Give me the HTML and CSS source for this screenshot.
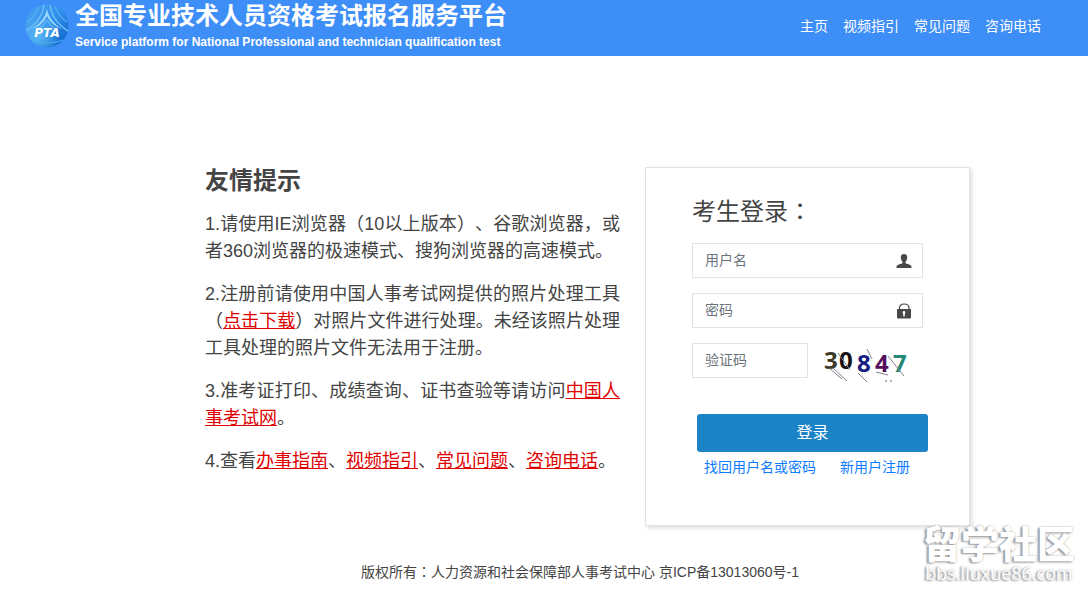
FILE: index.html
```html
<!DOCTYPE html>
<html lang="zh-CN">
<head>
<meta charset="utf-8">
<meta name="viewport" content="width=device-width, initial-scale=1">
<title>全国专业技术人员资格考试报名服务平台</title>
<link rel="stylesheet" href="styles.css">
</head>
<body>
<header class="header">
  <svg class="logo" viewBox="0 0 44 44" aria-hidden="true">
    <defs>
      <linearGradient id="globe" x1="0" y1="0" x2="1" y2="1">
        <stop offset="0" stop-color="#4ba5f3"/>
        <stop offset=".5" stop-color="#2f90ea"/>
        <stop offset="1" stop-color="#0a5fc0"/>
      </linearGradient>
      <radialGradient id="glow" cx=".3" cy=".75" r=".5">
        <stop offset="0" stop-color="#6cc6fa" stop-opacity=".7"/>
        <stop offset="1" stop-color="#6cc6fa" stop-opacity="0"/>
      </radialGradient>
      <clipPath id="disc"><circle cx="22" cy="22" r="21.500"/></clipPath>
    </defs>
    <circle cx="22" cy="22" r="21.500" fill="url(#globe)"/>
    <circle cx="22" cy="22" r="21.500" fill="url(#glow)"/>
    <g clip-path="url(#disc)" fill="none">
      <path d="M19 0C18 12 12 20 1 27M25 0C26 12 32 20 43 27" stroke="#6dbbf9" stroke-width="1.500"/>
      <path d="M14 2C12 9 8 14 2 18M30 2C32 9 36 14 42 18" stroke="#58abf5" stroke-width="1.200"/>
      <path d="M22 5C20 14 15 20 7 25C15 22 20 17 22 12C24 17 29 22 37 25C29 20 24 14 22 5Z" fill="#9bd6fc"/>
      <path d="M22 16C20 20 17 23 13 25M22 16C24 20 27 23 31 25" stroke="#64b9f7" stroke-width="1.200"/>
      <path d="M2 35Q22 43 42 35" stroke="#4daef0" stroke-width="1"/>
    </g>
    <text class="logo-text" x="22" y="33" text-anchor="middle">PTA</text>
  </svg>
  <div class="brand">
    <h1 class="brand-name">全国专业技术人员资格考试报名服务平台</h1>
    <p class="brand-sub">Service platform for National Professional and technician qualification test</p>
  </div>
  <nav class="nav">
    <a href="#">主页</a>
    <a href="#">视频指引</a>
    <a href="#">常见问题</a>
    <a href="#">咨询电话</a>
  </nav>
</header>

<main class="main">
  <section class="tips">
    <h2 class="tips-title">友情提示</h2>
    <p>1.请使用IE浏览器（10以上版本）、谷歌浏览器，或者360浏览器的极速模式、搜狗浏览器的高速模式。</p>
    <p>2.注册前请使用中国人事考试网提供的照片处理工具（<a href="#">点击下载</a>）对照片文件进行处理。未经该照片处理工具处理的照片文件无法用于注册。</p>
    <p>3.准考证打印、成绩查询、证书查验等请访问<a href="#">中国人事考试网</a>。</p>
    <p>4.查看<a href="#">办事指南</a>、<a href="#">视频指引</a>、<a href="#">常见问题</a>、<a href="#">咨询电话</a>。</p>
  </section>

  <form class="login">
    <h2 class="login-title">考生登录<span class="centered" lang="zh-TW">：</span></h2>
    <div class="field">
      <input type="text" placeholder="用户名" aria-label="用户名">
      <svg class="icon" viewBox="0 0 16 16" aria-hidden="true">
        <path d="M8 1C5.800 1 4.700 2.500 4.800 4.500C4.900 6.300 5.500 7.800 6.500 8.700V10C5.500 11.200 1 11.300 .500 13.500V15H15.500V13.500C15 11.300 10.500 11.200 9.500 10V8.700C10.500 7.800 11.100 6.300 11.200 4.500C11.300 2.500 10.200 1 8 1Z" fill="#484848"/>
      </svg>
    </div>
    <div class="field">
      <input type="password" placeholder="密码" aria-label="密码">
      <svg class="icon" viewBox="0 0 16 16" aria-hidden="true">
        <path d="M3.500 7V5C3.500 2.500 5.400 1 8.200 1S13 2.500 13 5V7" fill="none" stroke="#484848" stroke-width="1.200"/>
        <path fill-rule="evenodd" d="M1 6H15V14.500Q15 15.500 14 15.500H2Q1 15.500 1 14.500ZM8 8A1.500 1.500 0 0 0 7.200 10.700V13.500H8.800V10.700A1.500 1.500 0 0 0 8 8Z" fill="#484848"/>
      </svg>
    </div>
    <div class="code-row">
      <div class="field code-field">
        <input type="text" placeholder="验证码" aria-label="验证码">
      </div>
      <svg class="captcha" viewBox="0 0 90 40" role="img" aria-label="验证码图片">
        <text x="2" y="26" fill="#3b3a28">3</text>
        <text x="17" y="26" fill="#171012">0</text>
        <text x="35" y="29" fill="#161c80">8</text>
        <text x="53" y="29" fill="#55105f">4</text>
        <text x="71" y="29" fill="#258873">7</text>
        <g fill="none" stroke="#85808a" stroke-width="1">
          <path d="M7 25L20 36M11 25L25 38M16 10L28 27M36 30L45 39M45 6L50 16M54 29L66 32M66 13L82 33"/>
          <path d="M63 38H65M68 38H70" stroke="#776655"/>
        </g>
      </svg>
    </div>
    <div class="actions">
      <button class="submit" type="submit">登录</button>
      <div class="links">
        <a href="#">找回用户名或密码</a>
        <a href="#">新用户注册</a>
      </div>
    </div>
  </form>
</main>

<footer class="footer">版权所有<span class="centered" lang="zh-TW">：</span>人力资源和社会保障部人事考试中心 京ICP备13013060号-1</footer>

<div class="watermark">
  <span class="watermark-name">留学社区</span>
  <span class="watermark-url">bbs.liuxue86.com</span>
</div>
</body>
</html>
```

FILE: styles.css
```css
* {
  box-sizing: border-box;
}

body {
  margin: 0;
  position: relative;
  min-height: 100vh;
  overflow-x: hidden;
  background: #fff;
  color: #444;
  font-family: "Liberation Sans", Arial, "Noto Sans CJK SC", sans-serif;
  font-size: 14px;
  line-height: 20px;
  text-spacing-trim: space-all;
}

h1, h2, p {
  margin: 0;
}

.centered {
  font-family: "Noto Sans CJK TC", sans-serif;
  line-height: 1;
}

.header {
  display: flex;
  align-items: center;
  gap: 6px;
  height: 56px;
  padding: 0 47px 4px 25px;
  background: #3e8ef7;
  color: #fff;
}

.logo {
  flex: none;
  width: 44px;
  height: 44px;
}

.logo-text {
  fill: #fff;
  font: italic bold 12px "DejaVu Sans", sans-serif;
}

.brand {
  display: flex;
  flex-direction: column;
  gap: 2px;
  padding-bottom: 2px;
}

.brand-name {
  font-size: 24px;
  line-height: 32px;
  white-space: nowrap;
}

.brand-sub {
  font-size: 12px;
  font-weight: bold;
  line-height: 16px;
  white-space: nowrap;
}

.nav {
  display: flex;
  gap: 15px;
  margin-left: auto;
}

.nav a {
  color: #fff;
  text-decoration: none;
  white-space: nowrap;
}

.main {
  display: grid;
  grid-template-columns: minmax(0, 415px) 325px;
  justify-content: end;
  align-items: start;
  gap: 25px;
  padding: 111px 118px 0 40px;
}

.tips {
  display: flex;
  flex-direction: column;
  gap: 16px;
  font-size: 18px;
  line-height: 27px;
  text-align: justify;
}

.tips-title {
  font-size: 24px;
  line-height: 28px;
}

.tips a {
  color: #e00000;
  text-decoration: underline;
}

.login {
  display: flex;
  flex-direction: column;
  gap: 15px;
  padding: 28px 46px 48px;
  border: 1px solid #e2e2e2;
  background: #fff;
  box-shadow: 2px 2px 4px #ddd;
}

.login-title {
  font-size: 24px;
  font-weight: normal;
  line-height: 32px;
}

.field {
  position: relative;
}

.field input {
  display: block;
  width: 100%;
  height: 35px;
  padding: 0 12px 2px;
  border: 1px solid #e0e3e6;
  background: #fff;
  color: #444;
  font: inherit;
}

.field input::placeholder {
  color: #6c757d;
  opacity: 1;
}

.icon {
  position: absolute;
  top: 10px;
  right: 11px;
  width: 16px;
  height: 16px;
}

.code-row {
  display: flex;
  gap: 14px;
  height: 40px;
}

.code-field {
  width: 116px;
}

.captcha {
  width: 90px;
  height: 40px;
}

.captcha text {
  font: bold 24px "Open Sans", sans-serif;
}

.actions {
  display: flex;
  flex-direction: column;
  gap: 5px;
  margin: 16px -5px 0 5px;
}

.submit {
  height: 38px;
  border: 0;
  border-radius: 3px;
  background: #1c84c6;
  color: #fff;
  font: inherit;
  font-size: 16px;
}

.links {
  display: flex;
  gap: 24px;
  padding-left: 7px;
}

.links a {
  color: #0d7bff;
  text-decoration: none;
  white-space: nowrap;
}

.footer {
  padding: 36px 16px 12px 88px;
  text-align: center;
}

.watermark {
  position: absolute;
  right: 13px;
  bottom: 11px;
  display: flex;
  flex-direction: column;
  align-items: center;
  color: #fff;
  text-shadow: -2px 1px 2px #999, 0 0 2px #aaa;
  pointer-events: none;
}

.watermark-name {
  font-size: 38px;
  font-weight: 900;
  line-height: 36px;
}

.watermark-url {
  font-family: "Open Sans", sans-serif;
  font-size: 18px;
  line-height: 20px;
}
```
